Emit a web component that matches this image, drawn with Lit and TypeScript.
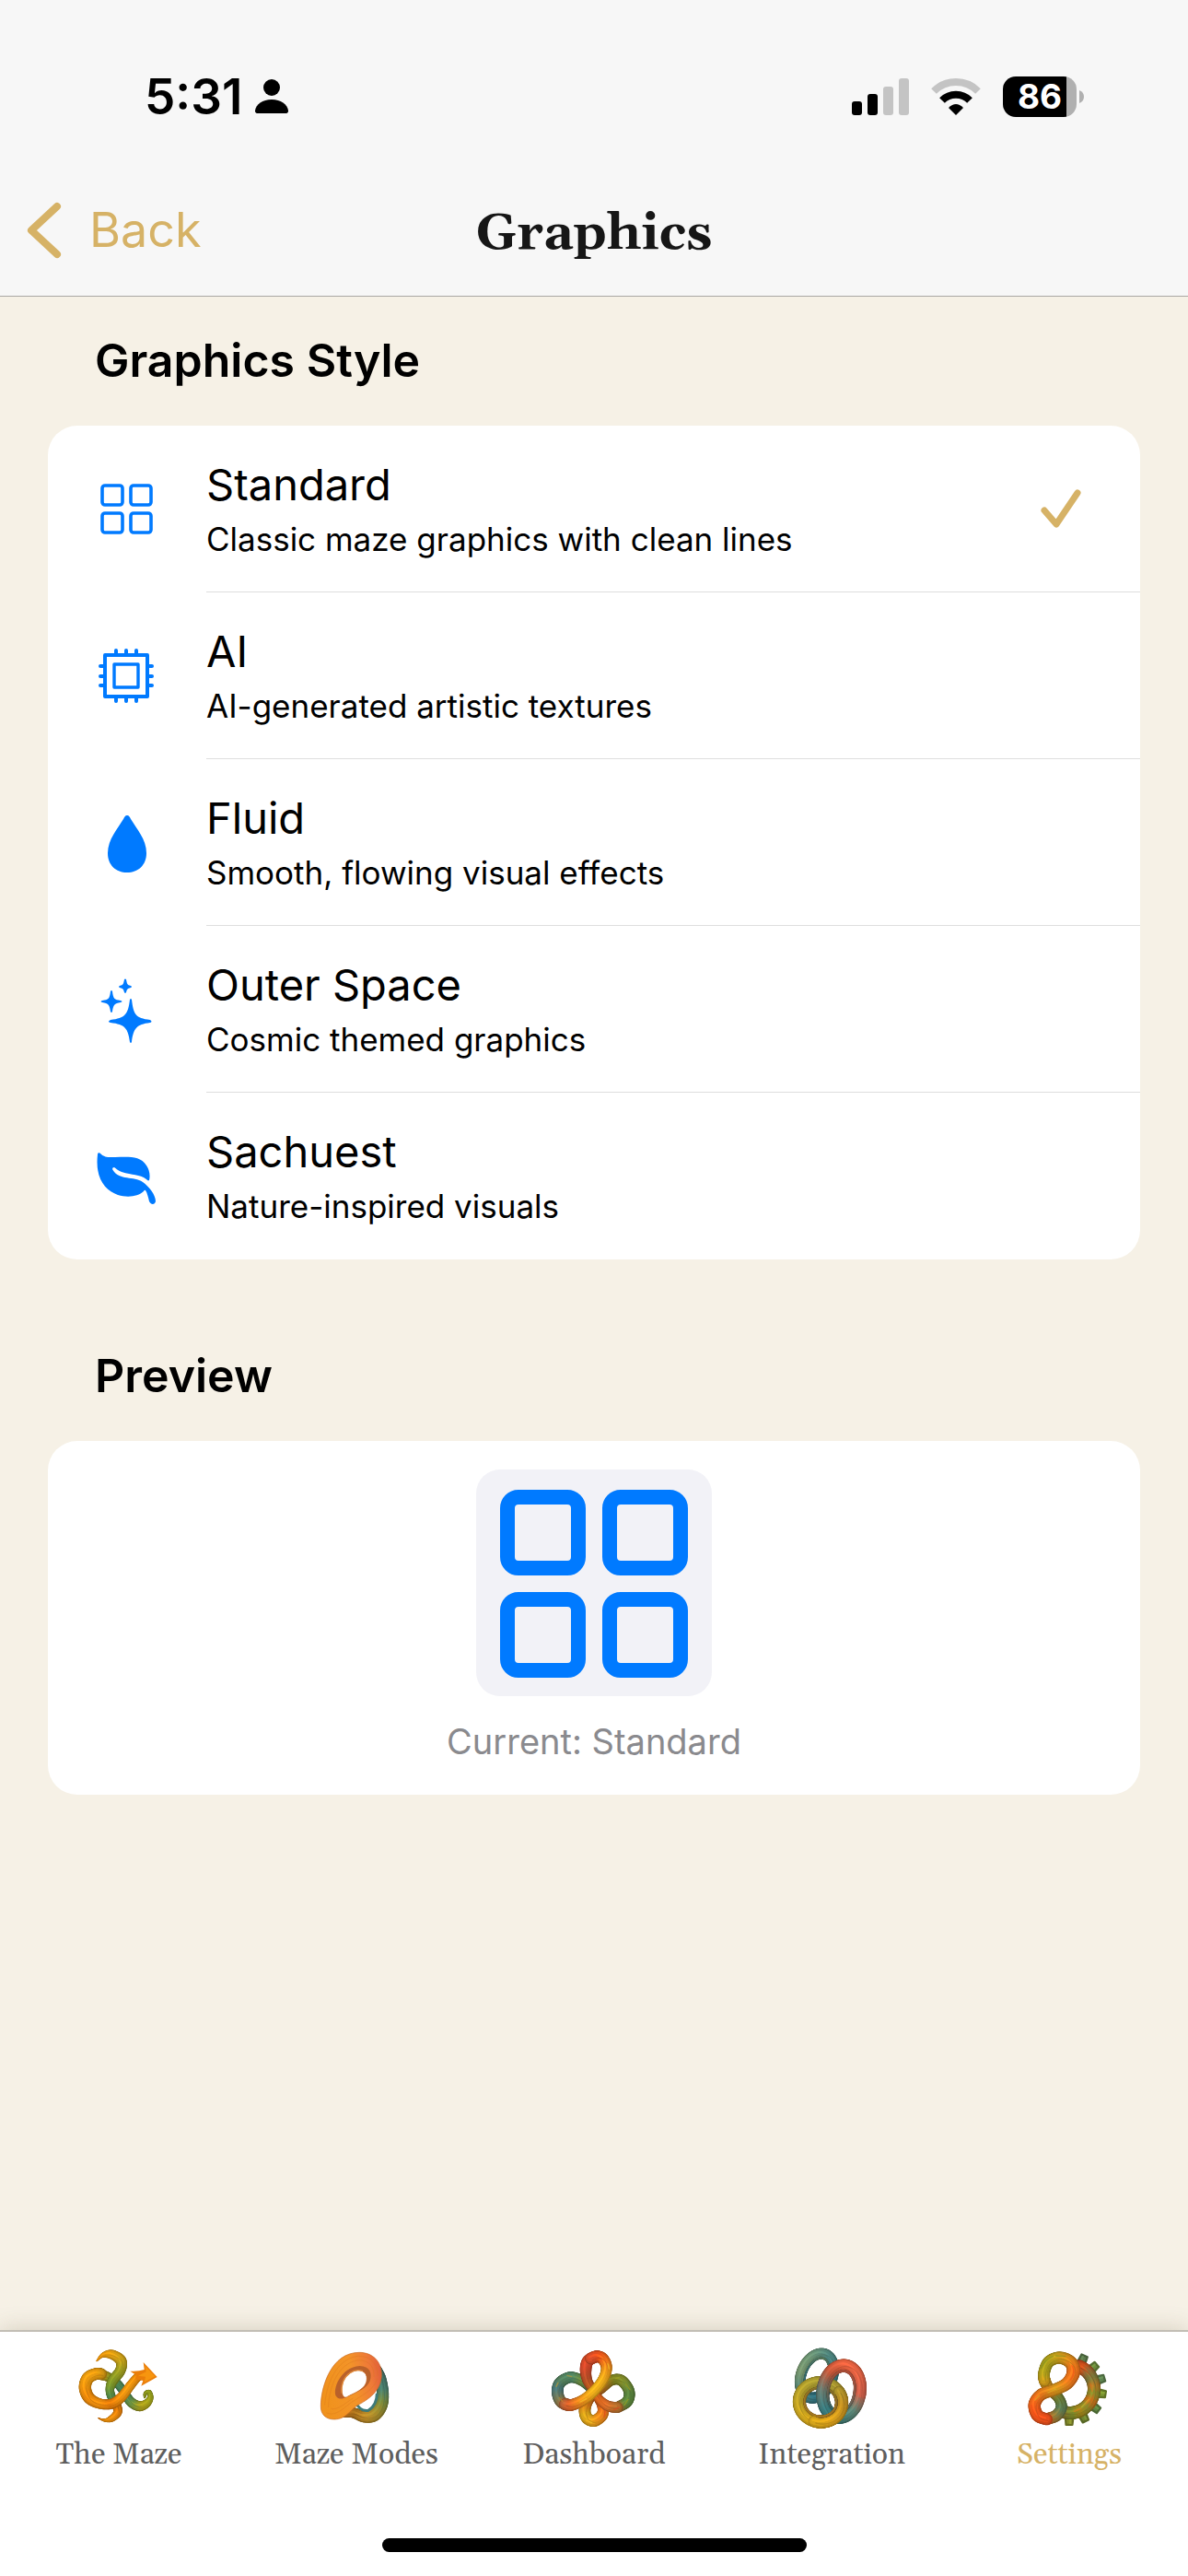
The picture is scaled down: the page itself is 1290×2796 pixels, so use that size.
import { LitElement, html, svg, css, nothing, type TemplateResult } from "lit";
import { customElement, property, state } from "lit/decorators.js";

/* ---------- shaded rope drawing for the tab icons ---------- */

type Knot = [x: number, y: number, width: number, color: string];
interface Sample {
  x: number;
  y: number;
  w: number;
  rgb: number[];
}

const toRgb = (hex: string) => [1, 3, 5].map((i) => parseInt(hex.slice(i, i + 2), 16));
const css3 = (c: number[]) => `rgb(${c.map((v) => Math.round(Math.max(0, Math.min(255, v)))).join(",")})`;
const shade = (c: number[], k: number) => c.map((v) => v * k);

const spline = (a: number, b: number, c: number, d: number, t: number) =>
  0.5 * (2 * b + (c - a) * t + (2 * a - 5 * b + 4 * c - d) * t * t + (3 * b - a - 3 * c + d) * t * t * t);

function sampleKnots(knots: Knot[], steps = 8): Sample[] {
  const out: Sample[] = [];
  for (let i = 0; i < knots.length - 1; i++) {
    const p = [knots[Math.max(0, i - 1)], knots[i], knots[i + 1], knots[Math.min(knots.length - 1, i + 2)]];
    const c1 = toRgb(p[1][3]);
    const c2 = toRgb(p[2][3]);
    for (let s = 0; s < steps; s++) {
      const t = s / steps;
      out.push({
        x: spline(p[0][0], p[1][0], p[2][0], p[3][0], t),
        y: spline(p[0][1], p[1][1], p[2][1], p[3][1], t),
        w: p[1][2] + (p[2][2] - p[1][2]) * t,
        rgb: c1.map((v, k) => v + (c2[k] - v) * t),
      });
    }
  }
  const last = knots[knots.length - 1];
  out.push({ x: last[0], y: last[1], w: last[2], rgb: toRgb(last[3]) });
  return out;
}

/* A rope is painted in passes, from its dark rim to its lit middle. */
function rope(knots: Knot[]) {
  const pts = sampleKnots(knots);
  const pass = (scale: number, tint: number, off = 0) =>
    pts.slice(1).map((p, i) => {
      const q = pts[i];
      const o = off * p.w;
      return svg`<line x1=${(q.x + o).toFixed(1)} y1=${(q.y + o).toFixed(1)} x2=${(p.x + o).toFixed(1)} y2=${(p.y + o).toFixed(1)}
        stroke=${css3(shade(p.rgb, tint))} stroke-width=${(p.w * scale).toFixed(1)} stroke-linecap="round"/>`;
    });
  return svg`${pass(1, 0.74)}${pass(0.84, 0.88, -0.03)}${pass(0.6, 0.98, -0.06)}${pass(0.16, 1.08, -0.12)}${pass(0.05, 0.84, 0.14)}`;
}

function ring(cx: number, cy: number, rx: number, ry: number, tilt: number, w: number, colors: string[], from = 0, to = 360) {
  const n = 16;
  const r = (tilt * Math.PI) / 180;
  const knots: Knot[] = [];
  for (let i = 0; i <= n; i++) {
    const deg = from + ((to - from) * i) / n;
    const a = (deg * Math.PI) / 180;
    const ex = rx * Math.cos(a);
    const ey = ry * Math.sin(a);
    const k = ((((deg % 360) + 360) % 360) / 360) * colors.length;
    const c1 = toRgb(colors[Math.floor(k) % colors.length]);
    const c2 = toRgb(colors[(Math.floor(k) + 1) % colors.length]);
    const mix = c1.map((v, j) => Math.round(v + (c2[j] - v) * (k % 1)));
    knots.push([
      cx + ex * Math.cos(r) - ey * Math.sin(r),
      cy + ex * Math.sin(r) + ey * Math.cos(r),
      w,
      "#" + mix.map((v) => v.toString(16).padStart(2, "0")).join(""),
    ]);
  }
  return rope(knots);
}

const mazeArt = () => svg`
  ${rope([[471, 276, 5, "#7f8a1c"], [474, 262, 12, "#87901e"], [486, 259, 15, "#8f9c20"], [490, 276, 18, "#98a01e"], [478, 295, 26, "#a8a41c"], [454, 304, 33, "#b0a01c"], [426, 290, 32, "#6f9440"], [404, 258, 28, "#3f8064"], [380, 228, 28, "#4f8550"], [350, 208, 30, "#8d9020"], [318, 199, 36, "#dc9610"]])}
  ${rope([[315, 157, 2, "#e08a0c"], [335, 138, 13, "#e8960f"], [365, 136, 30, "#eaa010"], [394, 156, 36, "#d2a218"], [392, 188, 34, "#a8a020"], [368, 220, 34, "#8d9b25"], [358, 250, 28, "#7a9a30"], [366, 280, 28, "#4f8a50"], [380, 302, 30, "#b9640a"], [383, 325, 28, "#e8820c"], [364, 344, 22, "#ee9010"], [342, 350, 10, "#e08a0c"], [320, 343, 2, "#c86a08"]])}
  ${rope([[330, 199, 37, "#c89414"], [312, 199, 38, "#e89a10"], [286, 213, 40, "#f0a012"], [277, 245, 40, "#f0980f"], [292, 279, 38, "#ec8a0c"], [330, 297, 33, "#f0900f"], [368, 295, 33, "#e67c0a"], [398, 272, 32, "#f0920f"], [424, 238, 30, "#f09a12"], [446, 212, 28, "#f0900c"], [462, 203, 26, "#f0860c"]])}
  <path d="M467 161 L512 209 L460 238 L466 221 L440 216 L444 203 L424 190 Q450 192 470 185 Z" fill="#ea7e0a"/>
  <path d="M472 173 L505 207 L470 226 L474 208 L450 205 L476 192 Z" fill="#f7950f"/>`;

const modesArt = () => svg`
  <defs>
    <linearGradient id="modes-face" x1="0" y1="0.4" x2="1" y2="0.2">
      <stop offset="0" stop-color="#f0921c"/><stop offset="0.5" stop-color="#f39428"/>
      <stop offset="0.8" stop-color="#ee7a38"/><stop offset="1" stop-color="#e05c3a"/>
    </linearGradient>
  </defs>
  ${rope([[1228, 185, 30, "#48706a"], [1240, 215, 36, "#477468"], [1247, 260, 38, "#4c8270"], [1241, 302, 42, "#7c8c3c"], [1218, 332, 44, "#a88e2c"], [1186, 338, 38, "#c08e2a"], [1152, 326, 34, "#a8701c"], [1120, 328, 24, "#c0741c"]])}
  <path d="M1158 290 Q1172 322 1200 318 Q1228 300 1228 262" fill="none" stroke="#3d7a78" stroke-width="9"/>
  <path fill-rule="evenodd" fill="url(#modes-face)" stroke="#c86a24" stroke-width="2"
    d="M1170 129 C1215 129 1243 160 1243 200 C1243 256 1198 283 1163 302 C1140 318 1125 347 1090 347 C1060 347 1045 330 1045 305 C1045 240 1080 129 1170 129 Z
       M1165 187 C1130 190 1112 225 1113 250 C1114 270 1120 278 1130 274 C1150 262 1195 250 1195 215 C1195 195 1182 187 1165 187 Z"/>
  <path fill-rule="evenodd" fill="#b9612a"
    d="M1172 173 C1204 174 1214 196 1205 222 C1196 246 1168 256 1130 274 C1118 280 1104 284 1095 272 C1082 250 1110 176 1172 173 Z
       M1165 187 C1130 190 1112 225 1113 250 C1114 270 1120 278 1130 274 C1150 262 1195 250 1195 215 C1195 195 1182 187 1165 187 Z"/>
  <path d="M1113 262 Q1110 216 1140 196 Q1160 182 1182 190" fill="none" stroke="#e08a3c" stroke-width="4"/>
  <g fill="none" stroke="#d9761c" stroke-width="2" opacity="0.55">
    <path d="M1058 300 C1062 240 1092 150 1166 141 C1210 140 1232 170 1230 205"/>
    <path d="M1070 308 C1070 250 1098 166 1164 155 C1202 152 1220 176 1218 208"/>
    <path d="M1062 325 C1090 340 1118 312 1144 292 C1180 268 1220 250 1228 215"/>
    <path d="M1078 312 C1100 318 1122 296 1150 278"/>
  </g>`;

const dashboardArt = () => svg`
  ${rope([[452, 308, 36, "#c2622a"], [484, 288, 36, "#5f8a3c"], [489, 254, 36, "#5a8440"], [464, 220, 36, "#84902c"], [432, 220, 34, "#7f8420"], [402, 246, 30, "#a86c1c"], [366, 275, 28, "#b05a1c"], [346, 308, 38, "#d87c18"], [350, 340, 38, "#dcaa1c"], [375, 352, 38, "#e6a41c"], [402, 332, 38, "#f08a1c"], [402, 302, 34, "#e8681c"], [384, 272, 28, "#b04a1c"]])}
  ${rope([[384, 272, 26, "#8a4a20"], [358, 240, 30, "#4f6e58"], [330, 218, 34, "#6f8a3c"], [296, 210, 36, "#528a68"], [264, 228, 37, "#55805c"], [256, 258, 38, "#4a7a7c"], [268, 290, 38, "#7e7a50"], [297, 301, 38, "#d8602a"]])}
  ${rope([[384, 142, 38, "#ee5a1c"], [356, 156, 38, "#e0502a"], [348, 186, 38, "#d84a2c"], [354, 222, 32, "#b8502a"], [374, 254, 28, "#c0601c"], [394, 284, 30, "#d8641c"], [422, 304, 34, "#e0702a"], [452, 308, 36, "#b8702c"]])}
  ${rope([[280, 298, 38, "#b0683c"], [302, 300, 38, "#e0622a"], [340, 284, 36, "#f0921c"], [378, 252, 34, "#f5b41c"], [406, 214, 34, "#f2b01c"], [416, 178, 36, "#f0981c"], [404, 150, 38, "#f2701c"], [384, 142, 38, "#ec521c"], [364, 149, 38, "#dc502a"]])}
  <g fill="none" stroke-linecap="round" stroke-width="4" opacity="0.6">
    <path d="M252 240 L258 228 M262 276 L272 288 M288 204 L302 208" stroke="#c8922c"/>
    <path d="M478 232 L492 250 M486 282 L474 300 M446 214 L458 210" stroke="#a8a41c"/>
    <path d="M350 350 L368 358 M420 166 L424 182 M330 290 L350 280" stroke="#f8c830"/>
    <path d="M440 316 L456 308 M408 340 L412 320" stroke="#e8421c"/>
  </g>`;

const integrationArt = () => {
  const gold = ["#c08f24", "#e0a41c", "#d6a81c", "#c0a428", "#b0a030", "#a89c34"];
  return svg`
  ${ring(1101, 205, 51, 76, 22, 34, ["#3a7880", "#2f7080", "#4a7c78", "#7a9870", "#6a9478", "#4c8480"])}
  ${ring(1101, 205, 36, 60, 22, 6, ["#35686c", "#2c6470", "#3a6c6c", "#5c7a5c"])}
  ${ring(1113, 291, 72, 66, 8, 37, gold)}
  ${ring(1113, 291, 52, 47, 8, 8, ["#94702a", "#a87a24", "#9a7424", "#80702c"])}
  ${ring(1181, 256, 62, 87, 10, 38, ["#d0604a", "#5f8878", "#3c7a74", "#3a7c80", "#6a7c70", "#c85a3c", "#ec6440", "#e66444"])}
  ${ring(1181, 256, 43, 67, 10, 8, ["#8c5a48", "#4c7068", "#306468", "#6c6250", "#a84e38", "#b0503c"])}
  ${ring(1113, 291, 72, 66, 8, 37, gold, -40, 100)}
  ${ring(1113, 291, 52, 47, 8, 8, ["#94702a", "#a87a24", "#9a7424", "#80702c"], -35, 95)}`;
};

const settingsArt = () => {
  const teeth = [-66, -42, -17, 9, 37, 64, 91];
  const tints = ["#5c7c4c", "#6a8a3c", "#5f8450", "#7a9430", "#5f8440", "#6f8430", "#848c2c"];
  const at = (deg: number, r: number) => [545 + r * Math.cos((deg * Math.PI) / 180), 247 + r * Math.sin((deg * Math.PI) / 180)];
  const arc: Knot[] = [
    [-68, "#b84a20"], [-52, "#d8541c"], [-36, "#9c6a34"], [-18, "#7a7c3c"], [0, "#b87a24"], [18, "#88902c"],
    [36, "#d0701c"], [54, "#8c8c2c"], [72, "#a8881c"], [90, "#7c8c2c"], [108, "#84702c"],
  ].map(([deg, color]) => {
    const [x, y] = at(deg as number, 79);
    return [x, y, 42, color as string] as Knot;
  });
  return svg`
  ${teeth.map((deg, i) => {
    const p = [at(deg - 8, 92), at(deg - 5, 118), at(deg + 5, 118), at(deg + 8, 92)];
    return svg`<path d=${"M" + p.map((q) => q.map((v) => v.toFixed(1)).join(" ")).join("L") + "Z"} fill=${tints[i]} stroke=${css3(shade(toRgb(tints[i]), 0.78))} stroke-width="7" stroke-linejoin="round"/>
      <path d=${"M" + at(deg - 2, 94).map((v) => v.toFixed(1)).join(" ") + "L" + at(deg - 2, 115).map((v) => v.toFixed(1)).join(" ")} stroke=${css3(shade(toRgb(tints[i]), 1.12))} stroke-width="7"/>`;
  })}
  ${rope(arc)}
  ${rope([[470, 346, 38, "#e2501c"], [502, 334, 38, "#9c7c34"], [518, 305, 36, "#5c8058"], [506, 274, 34, "#6c7c34"], [476, 246, 36, "#b8781c"], [461, 214, 38, "#d8a01c"]])}
  ${rope([[463, 222, 38, "#d89a1c"], [461, 196, 38, "#b8a41c"], [476, 160, 38, "#a8a01c"], [512, 146, 39, "#c4a01c"], [548, 162, 42, "#dc8c1c"], [557, 194, 44, "#f0741c"], [536, 230, 40, "#ee7a1c"], [494, 251, 38, "#d8981c"], [452, 266, 38, "#e07c1c"], [430, 298, 40, "#f06a1c"], [440, 334, 40, "#f2581c"], [470, 347, 38, "#ea501c"]])}
  <g fill="none" stroke-linecap="round" stroke-width="4" opacity="0.5">
    <path d="M452 180 Q464 152 490 142 M500 140 L530 142" stroke="#6f8a24"/>
    <path d="M552 172 Q566 196 548 218 M420 300 Q424 330 446 344" stroke="#f84a14"/>
    <path d="M500 248 L474 260 M446 270 L432 284 M584 306 L606 282" stroke="#d8c02c"/>
    <path d="M612 232 L618 256 M560 322 L580 312" stroke="#e8701c"/>
  </g>`;
};

/* ---------- plain symbols ---------- */

const grid = () => svg`<g fill="none" stroke="currentColor" stroke-width="3.6">
  <rect x="5" y="6" width="22" height="21" rx="3"/><rect x="36" y="6" width="22" height="21" rx="3"/>
  <rect x="5" y="36" width="22" height="21" rx="3"/><rect x="36" y="36" width="22" height="21" rx="3"/></g>`;

const chip = () => svg`<g fill="none" stroke="currentColor" stroke-width="4" stroke-linecap="round" stroke-linejoin="round">
  <rect x="8" y="9" width="46" height="45"/><rect x="18" y="19" width="26" height="25" stroke-width="3.4"/>
  <path d="M20 8V4M31 8V4M42 8V4M20 55V59M31 55V59M42 55V59M7 21H3M7 32H3M7 42H3M55 21H59M55 32H59M55 42H59"/></g>`;

const drop = () => svg`<path fill="currentColor" d="M32 2C34 2 35 4 36 6C42 16 53 28 53 43C53 56 44 64 32 64C20 64 11 56 11 43C11 28 22 16 28 6C29 4 30 2 32 2Z"/>`;

const sparkles = () => svg`<g fill="currentColor" transform="translate(-1 4)">
  <path d="M36 17Q37 15 38 17C40 33 42 37 58 39Q61 41 58 42C43 44 40 48 38 63Q37 65 36 63C34 48 31 44 15 42Q11 41 15 39C31 37 34 33 36 17Z"/>
  <path d="M15 8Q16 6 17 8C18 16 19 17 26 18Q29 19 26 20C19 21 18 23 17 30Q16 32 15 30C14 23 13 21 6 20Q3 19 6 18C13 17 14 16 15 8Z"/>
  <path d="M30 -5Q31 -6 32 -5C33 0 33 1 37 2Q39 3 37 4C33 5 33 6 32 9Q31 11 30 9C29 6 29 5 25 4Q23 3 25 2C29 1 29 0 30 -5Z"/></g>`;

const leaf = () => svg`<path fill="currentColor" transform="translate(-1 2)" d="M1 6C1 4 3 4 4 5C9 10 14 9 20 9C34 9 47 7 54 18C58 24 58 30 57 34C56 35 55 34 54 33C46 27 39 29 27 25C22 23 21 21 19 20Q17 20 17 22C24 35 40 29 50 36C57 41 64 50 64 57C63 61 59 61 57 57C56 53 55 48 53 45Q52 44 51 46C45 52 33 53 23 50C9 45 -2 32 1 6Z"/>`;

interface StyleOption {
  name: string;
  note: string;
  icon: () => TemplateResult | unknown;
}

const options: StyleOption[] = [
  { name: "Standard", note: "Classic maze graphics with clean lines", icon: grid },
  { name: "AI", note: "AI-generated artistic textures", icon: chip },
  { name: "Fluid", note: "Smooth, flowing visual effects", icon: drop },
  { name: "Outer Space", note: "Cosmic themed graphics", icon: sparkles },
  { name: "Sachuest", note: "Nature-inspired visuals", icon: leaf },
];

@customElement("status-bar")
export class StatusBar extends LitElement {
  static styles = css`
    :host {
      display: flex;
      justify-content: space-between;
      align-items: center;
      height: 64px;
      padding: 73px 113px 42px 157px;
      color: #000;
      font-family: Inter, "Liberation Sans", sans-serif;
    }
    .group {
      display: flex;
      align-items: center;
    }
    .clock {
      gap: 14px;
    }
    .time {
      font-size: 53px;
      font-weight: 600;
      line-height: 64px;
    }
    .signals {
      gap: 24px;
    }
    .battery {
      display: flex;
      align-items: center;
      gap: 3px;
    }
    .cell {
      width: 80px;
      height: 44px;
      border-radius: 14px;
      background: linear-gradient(to right, #000 69px, #b0b0b0 69px);
      color: #fff;
      font-size: 37px;
      font-weight: 700;
      line-height: 44px;
      text-align: center;
    }
    svg {
      display: block;
    }
  `;
  render() {
    return html`
      <div class="group clock">
        <span class="time">5:31</span>
        <svg width="36" height="40" viewBox="0 0 36 40" aria-hidden="true">
          <ellipse cx="18" cy="10" rx="9" ry="9" />
          <path d="M3 38C0 38 0 36 0 35C1 28 8 23 18 23C28 23 35 28 36 35C36 36 36 38 33 38Z" />
        </svg>
      </div>
      <div class="group signals">
        <svg width="62" height="40" viewBox="0 0 62 40" aria-label="Signal">
          <rect y="25" width="11" height="15" rx="3" /><rect x="17" y="17" width="11" height="23" rx="3" />
          <rect x="34" y="9" width="11" height="31" rx="3" fill="#c4c4c4" /><rect x="51" width="11" height="40" rx="3" fill="#c4c4c4" />
        </svg>
        <svg width="54" height="40" viewBox="0 0 54 40" aria-label="Wi-Fi">
          <path d="M3 14A34 34 0 0 1 51 14" fill="none" stroke="#c4c4c4" stroke-width="8" />
          <path d="M12 24A21 21 0 0 1 42 24" fill="none" stroke="#000" stroke-width="8" />
          <path d="M27 40L19 32Q27 24 35 32Z" />
        </svg>
        <div class="battery">
          <div class="cell">86</div>
          <svg width="5" height="14" viewBox="0 0 5 14" aria-hidden="true"><path d="M0 0Q5 2 5 7Q5 12 0 14Z" fill="#b0b0b0" /></svg>
        </div>
      </div>
    `;
  }
}

@customElement("tab-bar")
export class TabBar extends LitElement {
  @property() active = "Settings";

  static styles = css`
    :host {
      display: block;
      border-top: 2px solid #c2beb5;
      background: #fff;
      box-shadow: 0 0 24px rgba(90, 75, 40, 0.22);
      padding-bottom: 26px;
    }
    .tabs {
      display: grid;
      grid-template-columns: repeat(5, 1fr);
      padding-top: 16px;
    }
    .tab {
      display: flex;
      flex-direction: column;
      align-items: center;
      gap: 6px;
      color: #5e5e5e;
      font-family: Georgia, Gelasio, "Liberation Serif", serif;
      font-size: 32px;
      line-height: 44px;
      text-decoration: none;
    }
    .tab.active {
      color: #d6b266;
    }
    .art {
      display: block;
      width: 90px;
      height: 90px;
      overflow: visible;
    }
    .home {
      width: 461px;
      height: 15px;
      margin: 68px auto 0;
      border-radius: 8px;
      background: #000;
    }
  `;

  private tabs = [
    { name: "The Maze", box: "252 110 270 270", art: mazeArt },
    { name: "Maze Modes", box: "1026 110 270 270", art: modesArt },
    { name: "Dashboard", box: "240 110 270 270", art: dashboardArt },
    { name: "Integration", box: "1014 110 270 270", art: integrationArt },
    { name: "Settings", box: "408 110 270 270", art: settingsArt },
  ];

  render() {
    return html`
      <nav class="tabs" aria-label="Main">
        ${this.tabs.map(
          (t) => html`<a class="tab ${t.name === this.active ? "active" : ""}" href="#${t.name}">
            <svg class="art" viewBox=${t.box} aria-hidden="true">${t.art()}</svg>
            <span>${t.name}</span>
          </a>`
        )}
      </nav>
      <div class="home"></div>
    `;
  }
}

@customElement("app-root")
export class AppRoot extends LitElement {
  @state() private selected = 0;

  static styles = css`
    :host {
      display: flex;
      flex-direction: column;
      min-height: 100vh;
      background: #f6f1e6;
      color: #000;
      font-family: Inter, "Liberation Sans", sans-serif;
    }
    .header {
      border-bottom: 1px solid #a9a8a4;
      background: #f7f7f7;
    }
    .nav {
      display: grid;
      grid-template-columns: 1fr auto 1fr;
      align-items: center;
      height: 142px;
      padding: 0 29px;
    }
    .back {
      display: flex;
      align-items: center;
      justify-self: start;
      gap: 30px;
      color: #d6b266;
      font-size: 52px;
      line-height: 64px;
      text-decoration: none;
    }
    .title {
      margin: 0;
      padding-top: 8px;
      color: #161616;
      font-family: Georgia, Gelasio, "Liberation Serif", serif;
      font-size: 55px;
      font-weight: 700;
      line-height: 64px;
    }
    .main {
      display: flex;
      flex: 1;
      flex-direction: column;
      gap: 96px;
      padding: 39px 52px;
    }
    .heading {
      margin: 0 0 41px;
      padding-left: 51px;
      font-size: 50px;
      font-weight: 600;
      line-height: 60px;
    }
    .card {
      overflow: hidden;
      margin: 0;
      padding: 0;
      border-radius: 32px;
      background: #fff;
      list-style: none;
    }
    .row {
      display: flex;
      align-items: stretch;
      gap: 54px;
      width: 100%;
      height: 181px;
      padding: 0 0 0 54px;
      border: 0;
      background: none;
      color: inherit;
      font: inherit;
      text-align: left;
    }
    .symbol {
      flex: none;
      align-self: center;
      width: 64px;
      height: 64px;
      overflow: visible;
      color: #007aff;
    }
    .body {
      display: flex;
      flex: 1;
      align-items: center;
      justify-content: space-between;
      padding-right: 64px;
      border-bottom: 1px solid #dedede;
    }
    .item:last-child .body {
      border-bottom-color: transparent;
    }
    .text {
      padding-top: 6px;
    }
    .name {
      display: block;
      font-size: 47px;
      line-height: 60px;
    }
    .note {
      display: block;
      font-size: 35px;
      line-height: 58px;
    }
    .preview {
      display: flex;
      flex-direction: column;
      align-items: center;
      gap: 24px;
      padding: 31px 0 33px;
    }
    .tile {
      display: flex;
      align-items: center;
      justify-content: center;
      box-sizing: border-box;
      width: 256px;
      height: 246px;
      padding-top: 2px;
      border-radius: 26px;
      background: #f2f2f7;
      color: #007aff;
    }
    .current {
      color: #8a8a8e;
      font-size: 38px;
      line-height: 50px;
    }
  `;

  private previewArt() {
    return this.selected === 0
      ? html`<svg width="204" height="204" viewBox="0 0 204 204" aria-hidden="true">
          <g fill="none" stroke="currentColor" stroke-width="16">
            <rect x="8" y="8" width="77" height="77" rx="12" /><rect x="119" y="8" width="77" height="77" rx="12" />
            <rect x="8" y="119" width="77" height="77" rx="12" /><rect x="119" y="119" width="77" height="77" rx="12" />
          </g>
        </svg>`
      : html`<svg width="204" height="204" viewBox="0 -4 64 72" aria-hidden="true">${options[this.selected].icon()}</svg>`;
  }

  render() {
    return html`
      <header class="header">
        <status-bar></status-bar>
        <div class="nav">
          <a class="back" href="#back">
            <svg width="38" height="62" viewBox="0 0 38 62" aria-hidden="true">
              <path d="M33 5L5 31L33 57" fill="none" stroke="currentColor" stroke-width="8" stroke-linecap="round" stroke-linejoin="round" />
            </svg>
            <span>Back</span>
          </a>
          <h1 class="title">Graphics</h1>
        </div>
      </header>
      <main class="main">
        <section>
          <h2 class="heading">Graphics Style</h2>
          <ul class="card">
            ${options.map(
              (o, i) => html`<li class="item">
                <button class="row" aria-pressed=${i === this.selected} @click=${() => (this.selected = i)}>
                  <svg class="symbol" viewBox="0 0 64 64" aria-hidden="true">${o.icon()}</svg>
                  <span class="body">
                    <span class="text"><span class="name">${o.name}</span><span class="note">${o.note}</span></span>
                    ${i === this.selected
                      ? html`<svg width="45" height="44" viewBox="0 0 45 44" aria-hidden="true">
                          <path d="M5 24L18 39L41 5" fill="none" stroke="#d6b266" stroke-width="7" stroke-linecap="round" stroke-linejoin="round" />
                        </svg>`
                      : nothing}
                  </span>
                </button>
              </li>`
            )}
          </ul>
        </section>
        <section>
          <h2 class="heading">Preview</h2>
          <div class="card preview">
            <div class="tile">${this.previewArt()}</div>
            <span class="current">Current: ${options[this.selected].name}</span>
          </div>
        </section>
      </main>
      <tab-bar active="Settings"></tab-bar>
    `;
  }
}
